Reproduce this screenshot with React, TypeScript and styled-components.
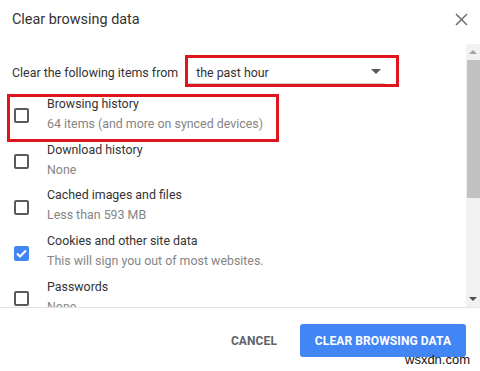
import React from "react";
import styled, { createGlobalStyle } from "styled-components";

const Global = createGlobalStyle`
  html, body { margin: 0; padding: 0; background: #fff; }
  body { font-family: Roboto, "Liberation Sans", Arial, sans-serif; }
  * { box-sizing: border-box; }
`;

const Dialog = styled.div`
  position: relative;
  width: 480px;
  height: 371px;
  background: #fff;
  display: flex;
  flex-direction: column;
  overflow: hidden;
`;

const Header = styled.div`
  height: 44px;
  display: flex;
  align-items: center;
  justify-content: space-between;
  padding: 0 12px 6px 12px;
`;

const Title = styled.div`
  font-size: 14.4px;
  color: #333;
`;

const CloseBtn = styled.div`
  width: 14px;
  height: 14px;
  display: flex;
  align-items: center;
  justify-content: center;
`;

const ScrollArea = styled.div`
  height: 264px;
  display: flex;
  border-bottom: 1px solid #e4e4e4;
`;

const Content = styled.div`
  flex: 1;
  overflow: hidden;
  padding: 11px 0 0 12px;
`;

const RangeRow = styled.div`
  display: flex;
  align-items: center;
  height: 32px;
`;

const RangeLabel = styled.span`
  font-size: 12.4px;
  color: #333;
  padding-top: 3px;
`;

const SelectBox = styled.div`
  position: relative;
  margin-left: 7px;
  width: 214px;
  height: 32px;
  display: flex;
  align-items: center;
  justify-content: space-between;
  padding: 3px 18px 0 11px;
  font-size: 12.4px;
  color: #333;
  &::before {
    content: "";
    position: absolute;
    left: 3px;
    right: 14px;
    bottom: 3px;
    height: 1px;
    background: #d0d0d0;
  }
  &::after {
    content: "";
    position: absolute;
    inset: 0;
    border: 3px solid #e0141e;
  }
`;

const Arrow = styled.div`
  width: 0;
  height: 0;
  margin-top: -2px;
  border-left: 5px solid transparent;
  border-right: 5px solid transparent;
  border-top: 5px solid #5a5a5a;
`;

const List = styled.div`
  margin-top: 4px;
  display: flex;
  flex-direction: column;
`;

const Item = styled.div<{ $highlight?: boolean }>`
  position: relative;
  height: 45.75px;
  display: flex;
  align-items: center;
  gap: 18px;
  padding-left: 2px;
  &::after {
    content: "";
    display: ${(p) => (p.$highlight ? "block" : "none")};
    position: absolute;
    left: -5px;
    top: 3px;
    width: 266px;
    height: 42px;
    border: 3px solid #e0141e;
  }
`;

const Box = styled.div<{ $checked?: boolean }>`
  width: 15px;
  height: 15px;
  margin-top: 4px;
  border-radius: 2px;
  border: ${(p) => (p.$checked ? "none" : "2px solid #5a5a5a")};
  background: ${(p) => (p.$checked ? "#4285f4" : "transparent")};
  display: flex;
  align-items: center;
  justify-content: center;
  flex-shrink: 0;
`;

const Texts = styled.div`
  display: flex;
  flex-direction: column;
`;

const Label = styled.div`
  font-size: 12.4px;
  line-height: 20px;
  color: #333;
`;

const Sub = styled.div`
  font-size: 12.4px;
  line-height: 20px;
  color: #858585;
`;

const Scrollbar = styled.div`
  width: 14px;
  background: #f1f1f1;
  display: flex;
  flex-direction: column;
  align-items: center;
`;

const ScrollArrow = styled.div<{ $down?: boolean }>`
  height: 16px;
  width: 100%;
  display: flex;
  align-items: center;
  justify-content: center;
  &::before {
    content: "";
    border-left: 4px solid transparent;
    border-right: 4px solid transparent;
    ${(p) => (p.$down ? "border-top: 4px solid #505050;" : "border-bottom: 4px solid #a3a3a3;")}
  }
`;

const Thumb = styled.div`
  width: 13px;
  margin-left: 1px;
  height: 138px;
  background: #c1c1c1;
`;

const Spacer = styled.div`
  flex: 1;
`;

const Footer = styled.div`
  flex: 1;
  display: flex;
  align-items: flex-start;
  justify-content: flex-end;
  padding: 16px 14px 0 0;
  gap: 23px;
`;

const TextButton = styled.div`
  height: 33px;
  display: flex;
  align-items: center;
  font-size: 12px;
  font-weight: 700;
  color: #5f6368;
  letter-spacing: 0.1px;
`;

const PrimaryButton = styled.div`
  height: 33px;
  width: 166px;
  border-radius: 3px;
  background: #4285f4;
  color: #fff;
  font-size: 12px;
  font-weight: 700;
  display: flex;
  align-items: center;
  justify-content: center;
  letter-spacing: 0.1px;
`;

const Watermark = styled.div`
  position: absolute;
  left: 405px;
  top: 352px;
  font-size: 13px;
  color: #111;
  font-family: "Liberation Sans", Arial, sans-serif;
`;

const items = [
  { label: "Browsing history", sub: "64 items (and more on synced devices)", checked: false, highlight: true },
  { label: "Download history", sub: "None", checked: false },
  { label: "Cached images and files", sub: "Less than 593 MB", checked: false },
  { label: "Cookies and other site data", sub: "This will sign you out of most websites.", checked: true },
  { label: "Passwords", sub: "None", checked: false },
];

export default function App() {
  return (
    <>
      <Global />
      <Dialog>
        <Header>
          <Title>Clear browsing data</Title>
          <CloseBtn>
            <svg width="13" height="13" viewBox="0 0 13 13">
              <path d="M1 1 L12 12 M12 1 L1 12" stroke="#6e6e6e" strokeWidth="1.5" />
            </svg>
          </CloseBtn>
        </Header>
        <ScrollArea>
          <Content>
            <RangeRow>
              <RangeLabel>Clear the following items from</RangeLabel>
              <SelectBox>
                <span>the past hour</span>
                <Arrow />
              </SelectBox>
            </RangeRow>
            <List>
              {items.map((it) => (
                <Item key={it.label} $highlight={it.highlight}>
                  <Box $checked={it.checked}>
                    {it.checked && (
                      <svg width="11" height="9" viewBox="0 0 11 9">
                        <path d="M1 4.5 L4 7.5 L10 1.5" stroke="#fff" strokeWidth="2" fill="none" />
                      </svg>
                    )}
                  </Box>
                  <Texts>
                    <Label>{it.label}</Label>
                    <Sub>{it.sub}</Sub>
                  </Texts>
                </Item>
              ))}
            </List>
          </Content>
          <Scrollbar>
            <ScrollArrow />
            <Thumb />
            <Spacer />
            <ScrollArrow $down />
          </Scrollbar>
        </ScrollArea>
        <Footer>
          <TextButton>CANCEL</TextButton>
          <PrimaryButton>CLEAR BROWSING DATA</PrimaryButton>
        </Footer>
        <Watermark>wsxdn.com</Watermark>
      </Dialog>
    </>
  );
}
